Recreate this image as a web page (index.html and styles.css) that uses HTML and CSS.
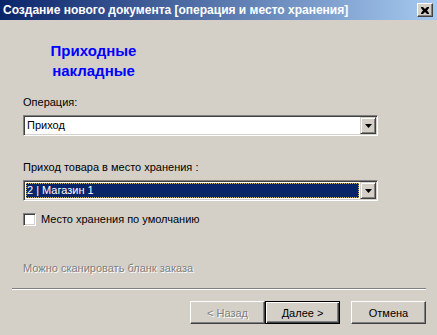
FILE: index.html
```html
<html>
	<head>
		<link rel="stylesheet" href="styles.css">
	</head>
	<body>
		<div class="window">
			<div class="titlebar">
				<span class="title">Создание нового документа [операция и место хранения]</span>
				<div class="close">
					<svg width="8" height="7" viewBox="0 0 8 7"><path d="M0 0h2l2 2 2-2h2v1l-2 2.5 2 2.5v1h-2l-2-2-2 2h-2v-1l2-2.5-2-2.5z" fill="#000"/></svg>
				</div>
			</div>

			<div class="content">
				<h1 class="heading">Приходные<br>накладные</h1>

				<div class="label first">Операция:</div>
				<div class="combo">
					<div class="combo-value">Приход</div>
					<div class="combo-btn"><svg width="7" height="4" viewBox="0 0 7 4"><path d="M0 0h7l-3.5 4z" fill="#000"/></svg></div>
				</div>

				<div class="label second">Приход товара в место хранения :</div>
				<div class="combo">
					<div class="combo-value selected">2 | Магазин 1</div>
					<div class="combo-btn"><svg width="7" height="4" viewBox="0 0 7 4"><path d="M0 0h7l-3.5 4z" fill="#000"/></svg></div>
				</div>

				<div class="check-row">
					<span class="checkbox"></span>
					<span>Место хранения по умолчанию</span>
				</div>

				<div class="hint">Можно сканировать бланк заказа</div>
			</div>

			<div class="footer">
				<div class="separator"></div>
				<div class="buttons">
					<div class="btn disabled">&lt; Назад</div>
					<div class="btn default">Далее &gt;</div>
					<div class="btn cancel">Отмена</div>
				</div>
			</div>
		</div>
	</body>
</html>
```

FILE: styles.css
```css
body {
	margin: 0;
	background: #d4d0c8;
	font-family: "Liberation Sans", Arial, sans-serif;
	font-size: 11px;
	color: #000;
}

.window {
	width: 437px;
	height: 335px;
	background: #d4d0c8;
	display: flex;
	flex-direction: column;
}

.titlebar {
	height: 20px;
	display: flex;
	align-items: center;
	justify-content: space-between;
	padding: 0 4px 0 3px;
	background: linear-gradient(to right, #0a246a, #a6caf0);
}

.title {
	color: #fff;
	font-weight: bold;
	font-size: 12px;
	white-space: nowrap;
}

.close {
	width: 16px;
	height: 14px;
	box-sizing: border-box;
	display: flex;
	align-items: center;
	justify-content: center;
	background: #d4d0c8;
	border: 1px solid;
	border-color: #fff #404040 #404040 #fff;
	box-shadow: inset -1px -1px #808080;
}

.content {
	padding: 0 59px 0 23px;
	display: flex;
	flex-direction: column;
}

.heading {
	margin: 21px 0 0 -23px;
	width: 187px;
	text-align: center;
	font-size: 15px;
	line-height: 20px;
	color: #0000ff;
}

.label {
	line-height: 13px;
}

.label.first {
	margin-top: 15px;
}

.label.second {
	margin-top: 25px;
}

.combo {
	margin-top: 6px;
	height: 21px;
	box-sizing: border-box;
	display: flex;
	background: #fff;
	border: 1px solid;
	border-color: #808080 #fff #fff #808080;
	box-shadow: inset 1px 1px #404040, inset -1px -1px #d4d0c8;
	padding: 2px 2px 2px 2px;
}

.combo-value {
	flex: 1;
	line-height: 15px;
	padding-left: 1px;
	margin-right: 1px;
	box-sizing: border-box;
	white-space: nowrap;
}

.combo-value.selected {
	background: #0a246a;
	color: #fff;
	outline: 1px dotted #c8b860;
	outline-offset: -1px;
}

.combo-btn {
	width: 16px;
	margin: -1px -1px -1px 0;
	box-sizing: border-box;
	display: flex;
	align-items: center;
	justify-content: center;
	background: #d4d0c8;
	border: 1px solid;
	border-color: #d4d0c8 #404040 #404040 #d4d0c8;
	box-shadow: inset 1px 1px #fff, inset -1px -1px #808080;
}

.check-row {
	margin-top: 12px;
	display: flex;
	align-items: center;
	gap: 5px;
	line-height: 13px;
}

.checkbox {
	width: 13px;
	height: 13px;
	box-sizing: border-box;
	background: #fff;
	border: 1px solid;
	border-color: #808080 #fff #fff #808080;
	box-shadow: inset 1px 1px #404040, inset -1px -1px #d4d0c8;
}

.hint {
	margin-top: 36px;
	line-height: 13px;
	color: #808080;
	text-shadow: 1px 1px #fff;
}

.footer {
	padding: 13px 11px 0 12px;
}

.separator {
	height: 1px;
	background: #808080;
	border-bottom: 1px solid #fff;
}

.buttons {
	margin-top: 11px;
	display: flex;
	justify-content: flex-end;
}

.btn {
	width: 75px;
	height: 23px;
	box-sizing: border-box;
	display: flex;
	align-items: center;
	justify-content: center;
	background: #d4d0c8;
	border: 1px solid;
	border-color: #fff #404040 #404040 #fff;
	box-shadow: inset -1px -1px #808080;
}

.btn.disabled {
	color: #808080;
	text-shadow: 1px 1px #fff;
}

.btn.default {
	border: 1px solid #000;
	box-shadow: inset 1px 1px #fff, inset -1px -1px #404040, inset -2px -2px #808080;
}

.btn.cancel {
	margin-left: 11px;
}
```
